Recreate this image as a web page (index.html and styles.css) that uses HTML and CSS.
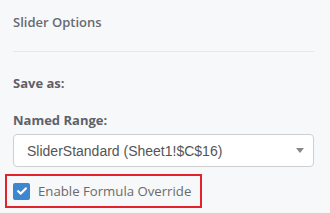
FILE: index.html
```html
<!DOCTYPE html>
<html lang="en">
<head>
    <meta charset="UTF-8">
    <title>Slider Options</title>
    <link rel="stylesheet" href="styles.css">
</head>
<body>
    <div class="panel">
        <h2 class="panel-title">Slider Options</h2>
        <hr class="divider">
        <div class="field">
            <label class="field-label">Save as:</label>
        </div>
        <div class="field">
            <label class="field-label">Named Range:</label>
            <div class="select">
                <span class="select-text">SliderStandard (Sheet1!$C$16)</span>
                <span class="select-caret"></span>
            </div>
        </div>
        <div class="check-row">
            <span class="checkbox">
                <svg width="10" height="8" viewBox="0 0 10 8">
                    <path d="M1.2 4.2 L3.8 6.6 L8.8 1.4" fill="none" stroke="#fff" stroke-width="2.2" stroke-linecap="round" stroke-linejoin="round"/>
                </svg>
            </span>
            <span class="check-label">Enable Formula Override</span>
        </div>
    </div>
</body>
</html>
```

FILE: styles.css
```css
* {
    margin: 0;
    padding: 0;
    box-sizing: border-box;
}

body {
    font-family: "Open Sans", Arial, sans-serif;
    background-color: #f7f8fa;
    width: 330px;
    height: 213px;
    overflow: hidden;
}

.panel {
    padding: 13px 16px 0 13px;
}

.panel-title {
    font-size: 13px;
    font-weight: 600;
    color: #676a74;
    line-height: 18px;
}

.divider {
    border: none;
    border-top: 1px solid #e6e8eb;
    margin: 20px 0 0 0;
}

.field {
    margin-top: 22px;
}

.field + .field {
    margin-top: 19px;
}

.field-label {
    display: block;
    font-size: 13px;
    font-weight: 700;
    color: #5f6168;
    line-height: 18px;
}

.select {
    margin-top: 5px;
    height: 33px;
    background-color: #fff;
    border: 1px solid #cfcfcf;
    border-radius: 4px;
    display: flex;
    align-items: center;
    justify-content: space-between;
    padding: 0 9px 0 13px;
}

.select-text {
    font-family: "Liberation Sans", Arial, sans-serif;
    font-size: 14px;
    color: #555;
}

.select-caret {
    width: 0;
    height: 0;
    border-left: 4px solid transparent;
    border-right: 4px solid transparent;
    border-top: 5px solid #888;
}

.check-row {
    display: flex;
    align-items: center;
    gap: 8px;
    width: 197px;
    height: 34px;
    margin: 7px 0 0 -8px;
    padding-left: 6px;
    border: 2px solid #e2232b;
}

.checkbox {
    flex: none;
    width: 17px;
    height: 17px;
    border-radius: 2px;
    background-color: #3d87d1;
    display: flex;
    align-items: center;
    justify-content: center;
}

.check-label {
    font-size: 13.2px;
    white-space: nowrap;
    color: #6a6a6a;
}
```
